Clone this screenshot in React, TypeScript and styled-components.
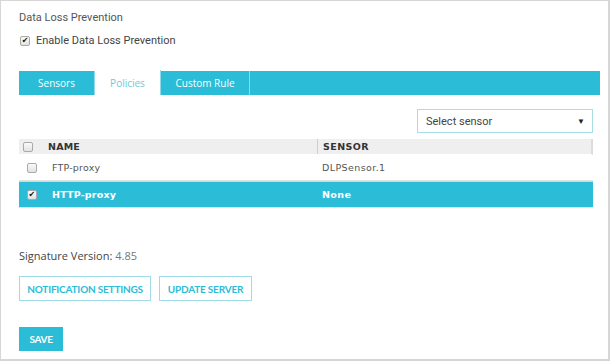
import React from "react";
import styled, { createGlobalStyle } from "styled-components";

const Global = createGlobalStyle`
  html, body { margin: 0; padding: 0; background: #fff; }
  * { box-sizing: border-box; }
`;

const BLUE = "#2bbcd7";

const Frame = styled.div`
  width: 610px;
  height: 361px;
  border: 1px solid #d6d6d6;
  border-right-width: 2px;
  border-bottom-width: 2px;
  padding: 10px 16px 0 18px;
  font-family: Roboto, "Liberation Sans", sans-serif;
  color: #555;
  display: flex;
  flex-direction: column;
`;

const Title = styled.div`
  font-size: 11px;
  line-height: 14px;
  color: #555;
`;

const CheckRow = styled.div`
  display: flex;
  align-items: center;
  gap: 6px;
  margin-top: 9px;
  padding-left: 1px;
  font-size: 11px;
  color: #444;
`;

const Box = styled.span<{ $checked?: boolean }>`
  width: 10px;
  height: 10px;
  flex: none;
  border: 1px solid #a9a9a9;
  border-radius: 2px;
  background: linear-gradient(#fafafa, #e2e2e2);
  display: inline-flex;
  align-items: center;
  justify-content: center;
  font-size: 8px;
  line-height: 1;
  color: #111;
  font-family: "DejaVu Sans", sans-serif;
  font-weight: bold;
`;

const TabBar = styled.div`
  margin-top: 24px;
  height: 24px;
  background: ${BLUE};
  display: flex;
  width: 581px;
`;

const Tab = styled.div<{ $active?: boolean; $w: number }>`
  width: ${(p) => p.$w}px;
  height: ${(p) => (p.$active ? 25 : 24)}px;
  margin-top: ${(p) => (p.$active ? -1 : 0)}px;
  display: flex;
  align-items: center;
  justify-content: center;
  font-family: "Open Sans", sans-serif;
  font-size: 10px;
  color: ${(p) => (p.$active ? "#6cc9dc" : "#fff")};
  background: ${(p) => (p.$active ? "#fff" : BLUE)};
  border-right: 1px solid #8fd9e8;
`;

const Toolbar = styled.div`
  display: flex;
  justify-content: flex-end;
  width: 574px;
  margin-top: 14px;
`;

const Select = styled.div`
  width: 176px;
  height: 24px;
  border: 1px solid #a8dde9;
  display: flex;
  align-items: center;
  justify-content: space-between;
  padding: 0 7px 0 8px;
  font-family: Roboto, sans-serif;
  font-size: 11px;
  color: #444;
`;

const Caret = styled.span`
  font-size: 8px;
  color: #222;
`;

const Table = styled.div`
  margin-top: 6px;
  width: 574px;
  font-family: "DejaVu Sans", Verdana, sans-serif;
  font-size: 9.5px;
`;

const Row = styled.div<{ $head?: boolean; $sel?: boolean }>`
  display: grid;
  grid-template-columns: 298px 1fr;
  height: ${(p) => (p.$head ? 16 : p.$sel ? 27 : 26)}px;
  align-items: center;
  background: ${(p) => (p.$head ? "#efefef" : p.$sel ? BLUE : "#fff")};
  color: ${(p) => (p.$head ? "#333" : p.$sel ? "#fff" : "#555")};
  font-weight: ${(p) => (p.$head || p.$sel ? "bold" : "normal")};
  border-bottom: 1px solid ${(p) => (p.$head ? "#fff" : "#e2e2e2")};
  border-top: ${(p) => (p.$sel ? "1px solid #d6d6d6" : "0")};
  ${(p) => (p.$head ? "border-right: 2px solid #dcdcdc;" : "")}
`;

const NameCell = styled.div<{ $head?: boolean }>`
  display: flex;
  align-items: center;
  gap: ${(p) => (p.$head ? 15 : 15)}px;
  padding-left: ${(p) => (p.$head ? 4 : 8)}px;
  letter-spacing: 0.2px;
`;

const SensorCell = styled.div<{ $head?: boolean }>`
  height: 100%;
  display: flex;
  align-items: center;
  padding-left: 5px;
  letter-spacing: 0.4px;
  ${(p) => (p.$head ? "border-left: 1px solid #cfcfcf;" : "")}
`;

const Sig = styled.div`
  margin-top: 40px;
  font-family: "Open Sans", sans-serif;
  font-size: 11px;
  color: #444;
  span { color: #777; }
`;

const Buttons = styled.div`
  display: flex;
  gap: 8px;
  margin-top: 13px;
`;

const OutlineBtn = styled.button<{ $w: number }>`
  width: ${(p) => p.$w}px;
  height: 25px;
  border: 1px solid #9fdbe8;
  background: #fff;
  color: ${BLUE};
  font-family: Lato, sans-serif;
  font-weight: bold;
  font-size: 10px;
  letter-spacing: -0.2px;
  white-space: nowrap;
  padding: 0;
`;

const SaveBtn = styled.button`
  margin-top: 26px;
  width: 44px;
  height: 24px;
  border: 0;
  background: ${BLUE};
  color: #fff;
  font-family: Lato, sans-serif;
  font-weight: bold;
  font-size: 10px;
  letter-spacing: -0.3px;
  padding: 0;
`;

export default function App() {
  return (
    <>
      <Global />
      <Frame>
        <Title>Data Loss Prevention</Title>
        <CheckRow>
          <Box $checked>✔</Box>
          Enable Data Loss Prevention
        </CheckRow>
        <TabBar>
          <Tab $w={76}>Sensors</Tab>
          <Tab $w={66} $active>Policies</Tab>
          <Tab $w={89}>Custom Rule</Tab>
        </TabBar>
        <Toolbar>
          <Select>
            Select sensor
            <Caret>▼</Caret>
          </Select>
        </Toolbar>
        <Table>
          <Row $head>
            <NameCell $head><Box />NAME</NameCell>
            <SensorCell $head>SENSOR</SensorCell>
          </Row>
          <Row>
            <NameCell><Box />FTP-proxy</NameCell>
            <SensorCell>DLPSensor.1</SensorCell>
          </Row>
          <Row $sel>
            <NameCell><Box $checked>✔</Box>HTTP-proxy</NameCell>
            <SensorCell>None</SensorCell>
          </Row>
        </Table>
        <Sig>Signature Version: <span>4.85</span></Sig>
        <Buttons>
          <OutlineBtn $w={132}>NOTIFICATION SETTINGS</OutlineBtn>
          <OutlineBtn $w={93}>UPDATE SERVER</OutlineBtn>
        </Buttons>
        <SaveBtn>SAVE</SaveBtn>
      </Frame>
    </>
  );
}
